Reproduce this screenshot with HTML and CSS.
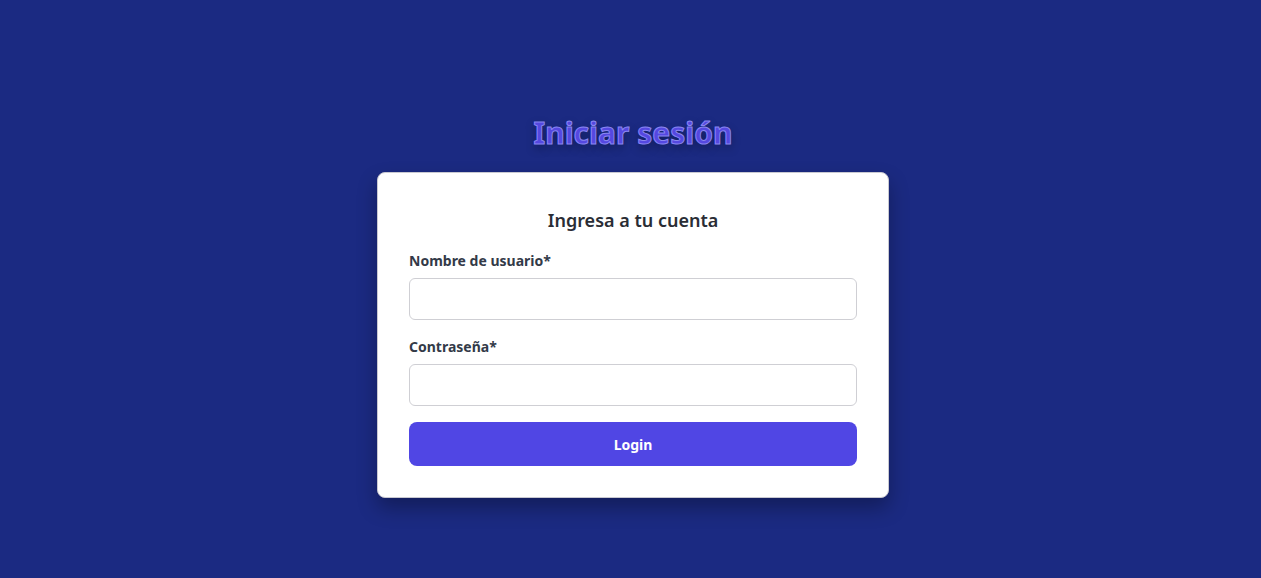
FILE: index.html
```html
<!DOCTYPE html>
<html lang="es">
<head>
<meta charset="utf-8">
<title>Iniciar sesión</title>
<link rel="stylesheet" href="styles.css">
</head>
<body>
<main class="page">
  <h1 class="title">Iniciar sesión</h1>
  <form class="card">
    <h2 class="card-title">Ingresa a tu cuenta</h2>
    <div class="field">
      <label class="label" for="u">Nombre de usuario*</label>
      <input class="input" id="u" type="text">
    </div>
    <div class="field">
      <label class="label" for="p">Contraseña*</label>
      <input class="input" id="p" type="password">
    </div>
    <button class="btn" type="button">Login</button>
  </form>
</main>
</body>
</html>
```

FILE: styles.css
```css
* { box-sizing: border-box; }
html, body { margin: 0; height: 100%; }
body {
  background: #1b2a82;
  font-family: "Noto Sans", "Open Sans", sans-serif;
}
.page {
  min-height: 100%;
  display: flex;
  flex-direction: column;
  align-items: center;
  padding-top: 113px;
  padding-left: 5px;
}
.title {
  margin: 0 0 19px;
  font-size: 30px;
  line-height: 40px;
  font-weight: 700;
  color: #5548e0;
  -webkit-text-stroke: 1px #8a86f0;
  text-shadow: 0 4px 10px rgba(0, 0, 0, 0.35);
}
.card {
  width: 512px;
  background: #fff;
  border: 1px solid #c9c9d1;
  border-radius: 8px;
  padding: 32px 31px 31px;
  box-shadow: 0 10px 20px rgba(0, 0, 0, 0.3);
  display: flex;
  flex-direction: column;
}
.card-title {
  margin: 1px 0 17px;
  text-align: center;
  font-size: 18px;
  line-height: 28px;
  font-weight: 600;
  color: #2a2d35;
}
.field {
  display: flex;
  flex-direction: column;
  margin-bottom: 16px;
}
.field + .field {
  margin-top: 1px;
}
.label {
  font-size: 14px;
  line-height: 20px;
  font-weight: 700;
  color: #333a48;
  margin-bottom: 7px;
}
.input {
  height: 42px;
  border: 1px solid #cfcfd4;
  border-radius: 6px;
  font: inherit;
  padding: 0 12px;
}
.btn {
  height: 44px;
  border: none;
  border-radius: 8px;
  background: #5046e4;
  color: #fff;
  font: inherit;
  font-size: 14px;
  font-weight: 700;
}
```
